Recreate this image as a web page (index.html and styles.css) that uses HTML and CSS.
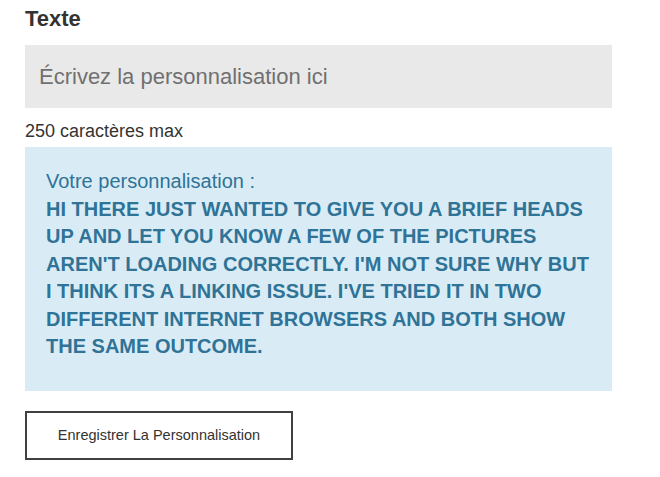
FILE: index.html
```html
<!DOCTYPE html>
<html lang="fr">
<head>
<meta charset="utf-8">
<title>Texte</title>
<link rel="stylesheet" href="styles.css">
</head>
<body>
<div class="page">
  <h2 class="title">Texte</h2>
  <input class="field" type="text" placeholder="Écrivez la personnalisation ici">
  <div class="hint">250 caractères max</div>
  <div class="preview">
    <div class="preview-label">Votre personnalisation :</div>
    <div class="preview-text">HI THERE JUST WANTED TO GIVE YOU A BRIEF HEADS UP AND LET YOU KNOW A FEW OF THE PICTURES AREN'T LOADING CORRECTLY. I'M NOT SURE WHY BUT I THINK ITS A LINKING ISSUE. I'VE TRIED IT IN TWO DIFFERENT INTERNET BROWSERS AND BOTH SHOW THE SAME OUTCOME.</div>
  </div>
  <button class="save" type="button">Enregistrer La Personnalisation</button>
</div>
</body>
</html>
```
FILE: styles.css
```css
html, body {
  margin: 0;
  padding: 0;
  background: #ffffff;
}

.page {
  width: 587px;
  padding: 7px 25px 0;
  font-family: "Liberation Sans", Arial, sans-serif;
  color: #333333;
  display: flex;
  flex-direction: column;
  align-items: flex-start;
}

.title {
  margin: 0;
  font-size: 22px;
  line-height: 24px;
  font-weight: bold;
  color: #333333;
}

.field {
  box-sizing: border-box;
  width: 587px;
  height: 63px;
  margin: 14px 0 0;
  padding: 0 14px;
  border: none;
  outline: none;
  background: #e9e9e9;
  font-family: "Liberation Sans", Arial, sans-serif;
  font-size: 22px;
  color: #333333;
}

.field::placeholder {
  color: #707070;
  opacity: 1;
}

.hint {
  margin-top: 13px;
  font-size: 18px;
  line-height: 21px;
  color: #333333;
}

.preview {
  box-sizing: border-box;
  width: 587px;
  margin-top: 5px;
  padding: 21px 21px 30px;
  background: #d9ecf6;
  color: #2f7396;
  font-size: 20px;
  line-height: 27.5px;
}

.preview-text {
  font-weight: bold;
}

.save {
  box-sizing: border-box;
  width: 268px;
  height: 49px;
  margin-top: 20px;
  padding: 0;
  border: 2px solid #404040;
  background: #ffffff;
  font-family: "Liberation Sans", Arial, sans-serif;
  font-size: 14.5px;
  color: #333333;
  cursor: pointer;
}
```
